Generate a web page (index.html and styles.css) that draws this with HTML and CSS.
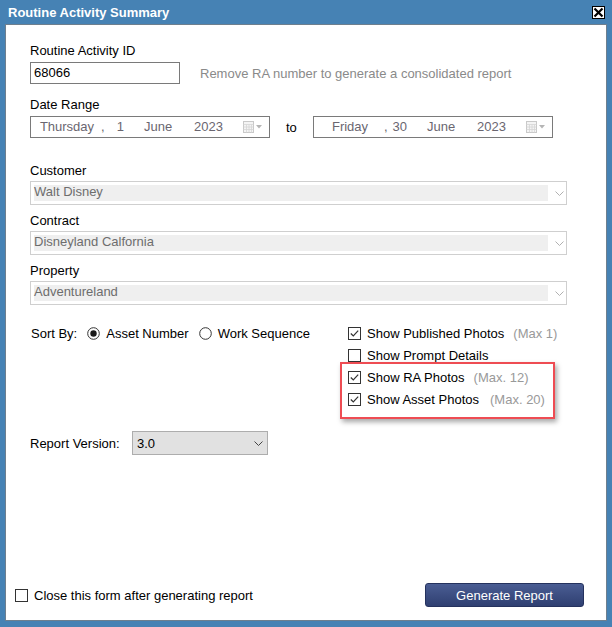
FILE: index.html
```html
<!DOCTYPE html>
<html>
<head>
<meta charset="utf-8">
<title>Routine Activity Summary</title>
<link rel="stylesheet" href="styles.css">
</head>
<body>
<div class="window">
  <div class="titlebar">
    <span class="title">Routine Activity Summary</span>
    <span class="close"><svg width="11" height="11" viewBox="0 0 11 11"><path d="M1.5 1.5 L9.5 9.5 M9.5 1.5 L1.5 9.5" stroke="#000" stroke-width="2.2"/></svg></span>
  </div>
  <div class="panel">
    <div class="content">
      <div class="label">Routine Activity ID</div>
      <div class="id-row">
        <div class="textbox">68066</div>
        <span class="hint">Remove RA number to generate a consolidated report</span>
      </div>

      <div class="label label-date">Date Range</div>
      <div class="date-row">
        <div class="date-box">
          <span class="wd">Thursday</span>
          <span class="comma">,</span>
          <span class="day">1</span>
          <span class="mon">June</span>
          <span class="yr">2023</span>
          <svg class="cal" width="20" height="12" viewBox="0 0 20 12"><rect x="0.5" y="0.5" width="10" height="11" fill="#f4f4f4" stroke="#c9c9c9"/><path d="M0.5 3.5 H10.5 M0.5 6 H10.5 M0.5 8.5 H10.5 M3.5 3.5 V11.5 M6 3.5 V11.5 M8.5 3.5 V11.5" stroke="#d6d6d6" stroke-width="0.8"/><path d="M13 4 H19 L16 7.5 Z" fill="#b5b5b5"/></svg>
        </div>
        <span class="to">to</span>
        <div class="date-box">
          <span class="wd">Friday</span>
          <span class="comma">,</span>
          <span class="day">30</span>
          <span class="mon">June</span>
          <span class="yr">2023</span>
          <svg class="cal" width="20" height="12" viewBox="0 0 20 12"><rect x="0.5" y="0.5" width="10" height="11" fill="#f4f4f4" stroke="#c9c9c9"/><path d="M0.5 3.5 H10.5 M0.5 6 H10.5 M0.5 8.5 H10.5 M3.5 3.5 V11.5 M6 3.5 V11.5 M8.5 3.5 V11.5" stroke="#d6d6d6" stroke-width="0.8"/><path d="M13 4 H19 L16 7.5 Z" fill="#b5b5b5"/></svg>
        </div>
      </div>

      <div class="label label-group">Customer</div>
      <div class="combo">
        <div class="combo-field">Walt Disney</div>
        <svg class="chev" width="9" height="5" viewBox="0 0 9 5"><path d="M0.5 0.5 L4.5 4.5 L8.5 0.5" fill="none" stroke="#b0b0b0"/></svg>
      </div>

      <div class="label label-next">Contract</div>
      <div class="combo">
        <div class="combo-field">Disneyland Calfornia</div>
        <svg class="chev" width="9" height="5" viewBox="0 0 9 5"><path d="M0.5 0.5 L4.5 4.5 L8.5 0.5" fill="none" stroke="#b0b0b0"/></svg>
      </div>

      <div class="label label-next">Property</div>
      <div class="combo">
        <div class="combo-field">Adventureland</div>
        <svg class="chev" width="9" height="5" viewBox="0 0 9 5"><path d="M0.5 0.5 L4.5 4.5 L8.5 0.5" fill="none" stroke="#b0b0b0"/></svg>
      </div>

      <div class="options">
        <div class="sort-row">
          <span class="sort-label">Sort By:</span>
          <span class="radio-item">
            <svg class="radio" width="13" height="13" viewBox="0 0 13 13"><circle cx="6.5" cy="6.5" r="5.8" fill="#fff" stroke="#333" stroke-width="1"/><circle cx="6.5" cy="6.5" r="3.2" fill="#1a1a1a"/></svg>
            <span>Asset Number</span>
          </span>
          <span class="radio-item">
            <svg class="radio" width="13" height="13" viewBox="0 0 13 13"><circle cx="6.5" cy="6.5" r="5.8" fill="#fff" stroke="#333" stroke-width="1"/></svg>
            <span>Work Sequence</span>
          </span>
        </div>
        <div class="checks">
          <div class="check-row">
            <svg class="cb" width="13" height="13" viewBox="0 0 13 13"><rect x="0.5" y="0.5" width="12" height="12" fill="#fff" stroke="#333"/><path d="M2.8 6.5 L5.3 9 L10.2 3.6" fill="none" stroke="#333" stroke-width="1.2"/></svg>
            <span>Show Published Photos</span><span class="max">(Max 1)</span>
          </div>
          <div class="check-row">
            <svg class="cb" width="13" height="13" viewBox="0 0 13 13"><rect x="0.5" y="0.5" width="12" height="12" fill="#fff" stroke="#333"/></svg>
            <span>Show Prompt Details</span>
          </div>
          <div class="check-row">
            <svg class="cb" width="13" height="13" viewBox="0 0 13 13"><rect x="0.5" y="0.5" width="12" height="12" fill="#fff" stroke="#333"/><path d="M2.8 6.5 L5.3 9 L10.2 3.6" fill="none" stroke="#333" stroke-width="1.2"/></svg>
            <span>Show RA Photos</span><span class="max">(Max. 12)</span>
          </div>
          <div class="check-row">
            <svg class="cb" width="13" height="13" viewBox="0 0 13 13"><rect x="0.5" y="0.5" width="12" height="12" fill="#fff" stroke="#333"/><path d="M2.8 6.5 L5.3 9 L10.2 3.6" fill="none" stroke="#333" stroke-width="1.2"/></svg>
            <span>Show Asset Photos</span><span class="max max-wide">(Max. 20)</span>
          </div>
          <div class="highlight"></div>
        </div>
      </div>

      <div class="version-row">
        <span class="version-label">Report Version:</span>
        <div class="select">
          <span>3.0</span>
          <svg width="9" height="5" viewBox="0 0 9 5"><path d="M0.5 0.5 L4.5 4.5 L8.5 0.5" fill="none" stroke="#444"/></svg>
        </div>
      </div>
    </div>

    <div class="bottom-row">
      <div class="close-check">
        <svg class="cb" width="13" height="13" viewBox="0 0 13 13"><rect x="0.5" y="0.5" width="12" height="12" fill="#fff" stroke="#333"/></svg>
        <span>Close this form after generating report</span>
      </div>
      <button class="btn">Generate Report</button>
    </div>
  </div>
</div>
</body>
</html>
```

FILE: styles.css
```css
html, body {
  margin: 0;
  padding: 0;
}
body {
  background: #4682b4;
  font-family: "Liberation Sans", Arial, sans-serif;
  font-size: 13px;
  color: #000;
}
.window {
  width: 612px;
  height: 627px;
  display: flex;
  flex-direction: column;
}
.titlebar {
  height: 24px;
  display: flex;
  align-items: center;
  justify-content: space-between;
  padding: 0 7px 0 8px;
  box-sizing: border-box;
}
.title {
  color: #fff;
  font-weight: bold;
  font-size: 13px;
  line-height: 16px;
  margin-top: 1px;
}
.close {
  width: 13px;
  height: 13px;
  box-sizing: border-box;
  border: 1px solid #000;
  background: #fff;
  display: flex;
  align-items: center;
  justify-content: center;
  margin-top: 1px;
}
.close svg { display: block; }
.panel {
  margin-left: 5px;
  width: 602px;
  height: 597px;
  box-sizing: border-box;
  background: #fff;
  border: 1px solid #6e7f8e;
  display: flex;
  flex-direction: column;
}
.content {
  padding: 18px 24px 0 24px;
  display: flex;
  flex-direction: column;
  align-items: flex-start;
}
.label {
  line-height: 16px;
  height: 16px;
  margin-bottom: 3px;
}
.label-date { margin-top: 13px; }
.label-group { margin-top: 25px; margin-bottom: 2px; }
.label-next { margin-top: 8px; margin-bottom: 2px; }

.id-row {
  display: flex;
  align-items: center;
  gap: 20px;
}
.textbox {
  width: 150px;
  height: 22px;
  box-sizing: border-box;
  border: 1px solid #7a7a7a;
  padding-left: 3px;
  line-height: 20px;
}
.hint {
  color: #8a8a8a;
}

.date-row {
  display: flex;
  align-items: center;
}
.date-box {
  width: 240px;
  height: 22px;
  box-sizing: border-box;
  border: 1px solid #7a7a7a;
  display: flex;
  align-items: center;
  padding-left: 5px;
  color: #6a6670;
  line-height: 20px;
}
.wd { width: 62px; text-align: center; }
.comma { width: 4px; margin-left: 3px; }
.day { width: 19px; text-align: right; }
.mon { width: 50px; margin-left: 20px; }
.yr { width: 49px; }
.cal { display: block; }
.to {
  width: 43px;
  padding-left: 16px;
  box-sizing: border-box;
}

.combo {
  width: 537px;
  height: 24px;
  box-sizing: border-box;
  border: 1px solid #cfcfcf;
  padding: 3px 0 3px 3px;
  display: flex;
  align-items: center;
}
.combo-field {
  width: 514px;
  height: 16px;
  background: #efefef;
  color: #6d6d6d;
  line-height: 14px;
}
.chev {
  display: block;
  margin-left: 7px;
}

.options {
  margin-top: 17px;
  display: flex;
  align-items: flex-start;
}
.sort-row {
  width: 318px;
  height: 22px;
  display: flex;
  align-items: center;
  padding-left: 1px;
  box-sizing: border-box;
}
.sort-label { margin-right: 10px; }
.radio-item {
  display: flex;
  align-items: center;
  gap: 6px;
  margin-right: 10px;
}
.radio { display: block; }
.checks {
  position: relative;
}
.check-row {
  height: 22px;
  display: flex;
  align-items: center;
}
.cb { display: block; margin-right: 6px; }
.max {
  color: #999;
  margin-left: 9px;
}
.max-wide { margin-left: 11px; }
.highlight {
  position: absolute;
  left: -8px;
  top: 40px;
  width: 215px;
  height: 57px;
  box-sizing: border-box;
  border: 2px solid #ee4c53;
  box-shadow: 2px 3px 5px rgba(0, 0, 0, 0.35);
}

.version-row {
  margin-top: 21px;
  display: flex;
  align-items: center;
}
.version-label { width: 102px; }
.select {
  width: 136px;
  height: 24px;
  box-sizing: border-box;
  border: 1px solid #adadad;
  background: #e1e1e1;
  display: flex;
  align-items: center;
  justify-content: space-between;
  padding: 0 4px 0 4px;
}
.select svg { display: block; }

.bottom-row {
  margin-top: auto;
  margin-bottom: 13px;
  display: flex;
  align-items: center;
  justify-content: space-between;
  padding: 0 22px 0 9px;
}
.close-check {
  display: flex;
  align-items: center;
}
.btn {
  width: 159px;
  height: 24px;
  box-sizing: border-box;
  border: 1px solid #25325e;
  border-radius: 3px;
  background: linear-gradient(#4a5d93, #2f3f71);
  color: #fff;
  font-family: "Liberation Sans", Arial, sans-serif;
  font-size: 13px;
  padding: 0;
}
```
